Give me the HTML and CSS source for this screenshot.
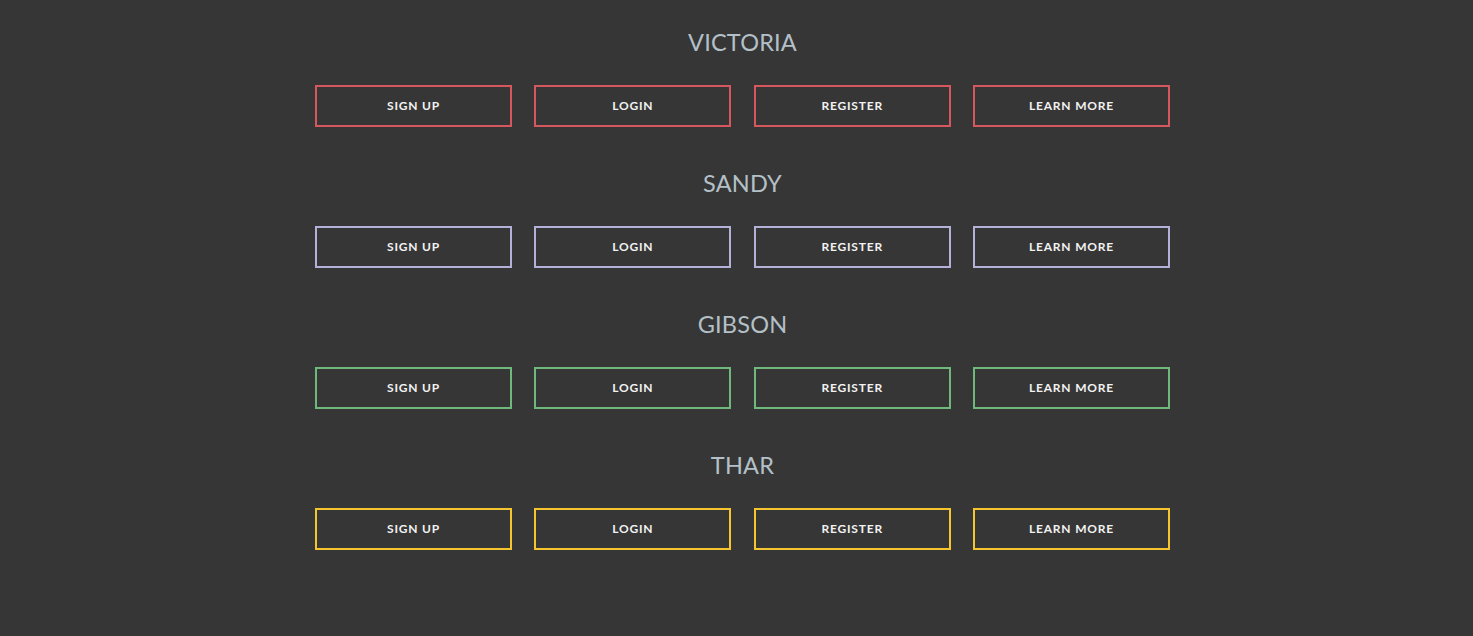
FILE: index.html
```html
<!DOCTYPE html>
<html>
<head>
<meta charset="utf-8">
<link rel="stylesheet" href="styles.css">
</head>
<body>
<main class="page">
  <section class="group victoria">
    <h2 class="title">VICTORIA</h2>
    <div class="row">
      <a class="btn">SIGN UP</a><a class="btn">LOGIN</a><a class="btn">REGISTER</a><a class="btn">LEARN MORE</a>
    </div>
  </section>
  <section class="group sandy">
    <h2 class="title">SANDY</h2>
    <div class="row">
      <a class="btn">SIGN UP</a><a class="btn">LOGIN</a><a class="btn">REGISTER</a><a class="btn">LEARN MORE</a>
    </div>
  </section>
  <section class="group gibson">
    <h2 class="title">GIBSON</h2>
    <div class="row">
      <a class="btn">SIGN UP</a><a class="btn">LOGIN</a><a class="btn">REGISTER</a><a class="btn">LEARN MORE</a>
    </div>
  </section>
  <section class="group thar">
    <h2 class="title">THAR</h2>
    <div class="row">
      <a class="btn">SIGN UP</a><a class="btn">LOGIN</a><a class="btn">REGISTER</a><a class="btn">LEARN MORE</a>
    </div>
  </section>
</main>
</body>
</html>
```

FILE: styles.css
```css
html, body {
  margin: 0;
  padding: 0;
  background: #363636;
  height: 100%;
}
body {
  font-family: Lato, "Open Sans", "Liberation Sans", sans-serif;
}
.page {
  display: flex;
  flex-direction: column;
  align-items: center;
  padding-top: 27px;
  padding-left: 12px;
  gap: 41px;
}
.group {
  display: flex;
  flex-direction: column;
  align-items: center;
}
.title {
  margin: 0 0 28px 0;
  font-size: 23.5px;
  line-height: 30px;
  font-weight: 400;
  color: #b4c0c8;
  letter-spacing: 0.2px;
}
.row {
  display: flex;
  gap: 22.33px;
}
.btn {
  box-sizing: border-box;
  width: 197px;
  height: 42px;
  padding-bottom: 2px;
  display: flex;
  align-items: center;
  justify-content: center;
  border: 2px solid;
  color: #f2f2f2;
  font-size: 12px;
  font-weight: 700;
  letter-spacing: 0.8px;
}
.victoria .btn { border-color: #d7575f; }
.sandy .btn { border-color: #b4b1d8; }
.gibson .btn { border-color: #6fb97c; }
.thar .btn { border-color: #f5c530; }
```
